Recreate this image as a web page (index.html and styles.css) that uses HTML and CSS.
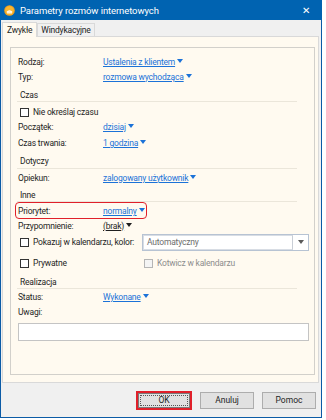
FILE: index.html
```html
<!DOCTYPE html>
<html lang="pl">
<head>
<meta charset="utf-8">
<title>Parametry rozmów internetowych</title>
<link rel="stylesheet" href="styles.css">
</head>
<body>
<div class="window">
  <div class="titlebar">
    <svg class="appicon" width="11" height="11" viewBox="0 0 11 11">
      <circle cx="5.5" cy="5.5" r="5.3" fill="#f4a21c"/>
      <circle cx="5.5" cy="5.5" r="4.2" fill="#f7b733"/>
      <path d="M2.2 7.2 Q5.5 3.2 8.8 7.2 Q5.5 6.2 2.2 7.2Z" fill="#fff"/>
      <rect x="3" y="7.2" width="5" height="1.2" fill="#fff"/>
    </svg>
    <span class="title">Parametry rozmów internetowych</span>
    <span class="close">✕</span>
  </div>
  <div class="tabs">
    <div class="tab active">Zwykłe</div>
    <div class="tab">Windykacyjne</div>
  </div>
  <div class="page">
    <div class="group">
      <div class="row"><span class="label">Rodzaj:</span><span class="link">Ustalenia z klientem</span><span class="arrow"></span></div>
      <div class="row"><span class="label">Typ:</span><span class="link">rozmowa wychodząca</span><span class="arrow"></span></div>

      <div class="stitle st-czas">Czas</div>
      <div class="row chkrow r-nieokr"><span class="chk"></span><span>Nie określaj czasu</span></div>
      <div class="row r16"><span class="label">Początek:</span><span class="link">dzisiaj</span><span class="arrow"></span></div>
      <div class="row r16"><span class="label">Czas trwania:</span><span class="link">1 godzina</span><span class="arrow"></span></div>

      <div class="stitle st-dot">Dotyczy</div>
      <div class="row r-opiekun"><span class="label">Opiekun:</span><span class="link">zalogowany użytkownik</span><span class="arrow"></span></div>

      <div class="stitle st-inne">Inne</div>
      <div class="row r-prio">
        <span class="hl"></span>
        <span class="label">Priorytet:</span><span class="link">normalny</span><span class="arrow"></span>
      </div>
      <div class="row"><span class="label">Przypomnienie:</span><span class="plain">(brak)</span><span class="arrow dark"></span></div>
      <div class="row r-pokaz">
        <span class="chkcell"><span class="chk"></span><span>Pokazuj w kalendarzu, kolor:</span></span>
        <span class="combo"><span class="combo-text">Automatyczny</span><span class="combo-btn"><span class="tri"></span></span></span>
      </div>
      <div class="row r-pryw">
        <span class="chkcell"><span class="chk"></span><span>Prywatne</span></span>
        <span class="chkcell disabled"><span class="chk"></span><span>Kotwicz w kalendarzu</span></span>
      </div>

      <div class="stitle st-real">Realizacja</div>
      <div class="row"><span class="label">Status:</span><span class="link">Wykonane</span><span class="arrow"></span></div>
      <div class="row"><span class="label">Uwagi:</span></div>
      <div class="textarea"></div>
    </div>
  </div>
  <div class="footer">
    <span class="focusbox"><button class="btn ok"><span class="dots">OK</span></button></span>
    <button class="btn">Anuluj</button>
    <button class="btn">Pomoc</button>
  </div>
</div>
</body>
</html>
```
FILE: styles.css
```css
* { box-sizing: border-box; }
html, body { margin: 0; padding: 0; background: #ffffff; }
body {
  font-family: Roboto, "Liberation Sans", sans-serif;
  font-size: 8.5px;
  letter-spacing: -0.2px;
  color: #1e1e1e;
  width: 326px;
  height: 420px;
  overflow: hidden;
}
.window {
  width: 322px;
  height: 418px;
  border: 1px solid #0b5ba6;
  border-top: none;
  background: #f0f0f0;
  display: flex;
  flex-direction: column;
}
.titlebar {
  height: 20px;
  flex: none;
  background: #0063b1;
  color: #fff;
  display: flex;
  align-items: center;
  padding-left: 3px;
  margin: 0 -1px;
}
.appicon { flex: none; margin-right: 5px; margin-left: 1px; }
.title { font-size: 9.5px; letter-spacing: -0.1px; flex: 1; white-space: nowrap; }
.close { font-size: 10px; width: 20px; margin-right: 6px; text-align: center; letter-spacing: 0; }

.tabs {
  height: 16px;
  flex: none;
  display: flex;
  align-items: flex-end;
  padding-left: 1px;
  position: relative;
  z-index: 1;
}
.tab {
  height: 13px;
  line-height: 12px;
  padding: 0 3px;
  border: 1px solid #d9d9d9;
  border-bottom: none;
  background: #f0f0f0;
  color: #1e1e1e;
  white-space: nowrap;
}
.tab.active {
  height: 15px;
  line-height: 14px;
  padding: 0 4px;
  background: #fffaf0;
  margin-bottom: -1px;
}
.page {
  flex: none;
  height: 347px;
  margin: 0 2px 0 1px;
  border: 1px solid #d9d9d9;
  background: #fffaf0;
  padding: 10px 3px 7px 7px;
  display: flex;
}
.group {
  flex: 1;
  border: 1px solid #d2d0cb;
  padding: 6px 5px 0 7px;
  display: flex;
  flex-direction: column;
}
.row {
  height: 15px;
  flex: none;
  display: flex;
  align-items: center;
  white-space: nowrap;
  position: relative;
}
.r16 { height: 16px; }
.label { width: 85px; flex: none; }
.link {
  color: #1b72d8;
  text-decoration: underline;
  text-underline-offset: 1px;
}
.plain {
  color: #1e1e1e;
  text-decoration: underline;
  text-underline-offset: 1px;
}
.arrow {
  width: 0; height: 0;
  margin-left: 2px;
  border-left: 3.5px solid transparent;
  border-right: 3.5px solid transparent;
  border-top: 4px solid #1b72d8;
  position: relative;
  top: -1px;
}
.arrow.dark { border-top-color: #1e1e1e; }

.stitle {
  flex: none;
  margin: 0 12px 0 -1px;
  padding-left: 3px;
  line-height: 12px;
  border-bottom: 1px solid #ebe6da;
  color: #1e1e1e;
}
.st-czas { padding-top: 5px; }
.st-dot { padding-top: 4px; line-height: 13px; }
.st-inne { padding-top: 5px; line-height: 11px; }
.st-real { padding-top: 3px; }

.chkrow { padding-left: 2px; }
.r-nieokr { margin-top: 3px; height: 14px; }
.r-opiekun { margin-top: 1px; }
.r-prio { margin-top: 2px; height: 14px; }
.r-pokaz { height: 18px; }
.r-pryw { margin-top: 2px; height: 20px; }
.chk {
  width: 9px; height: 9px;
  border: 1px solid #333;
  background: #fff;
  margin-right: 4px;
  flex: none;
}
.chkcell {
  display: flex;
  align-items: center;
  width: 124px;
  padding-left: 2px;
  flex: none;
}
.chkcell.disabled { color: #8d8d8d; width: auto; }
.chkcell.disabled .chk { border-color: #b5b5b5; background: #f4f4f4; }

.hl {
  position: absolute;
  left: -3px;
  top: -2px;
  width: 132px;
  height: 17px;
  border: 1.5px solid #e0202a;
  border-radius: 4px;
}

.combo {
  width: 167px;
  height: 17px;
  border: 1px solid #b7c3d3;
  background: #fff;
  display: flex;
  align-items: stretch;
}
.combo-text {
  flex: 1;
  border: 1px solid #d8dde4;
  border-right: 1px solid #c9ced6;
  padding-left: 3px;
  line-height: 13px;
  color: #6d6d6d;
}
.combo-btn {
  width: 15px;
  display: flex;
  align-items: center;
  justify-content: center;
}
.tri {
  width: 0; height: 0;
  border-left: 3px solid transparent;
  border-right: 3px solid transparent;
  border-top: 4px solid #5a5a5a;
}

.textarea {
  margin-top: 4px;
  height: 18px;
  width: 291px;
  border: 1px solid #c4c4c4;
  background: #fff;
  flex: none;
}

.footer {
  flex: 1;
  display: flex;
  align-items: center;
  justify-content: flex-end;
  padding: 0 5px 0 0;
  gap: 8px;
}
.btn {
  font: inherit;
  color: #1e1e1e;
  width: 54px;
  height: 17px;
  padding: 0;
  background: #e1e1e1;
  border: 1px solid #adadad;
  border-radius: 0;
}
.focusbox {
  border: 2px solid #e0202a;
  display: flex;
}
.btn.ok {
  border: 1px solid #7a7a7a;
  padding: 1px;
  height: 15px;
  width: 52px;
}
.dots {
  display: flex;
  height: 100%;
  align-items: center;
  justify-content: center;
  border: 1px dotted #555;
}
```
